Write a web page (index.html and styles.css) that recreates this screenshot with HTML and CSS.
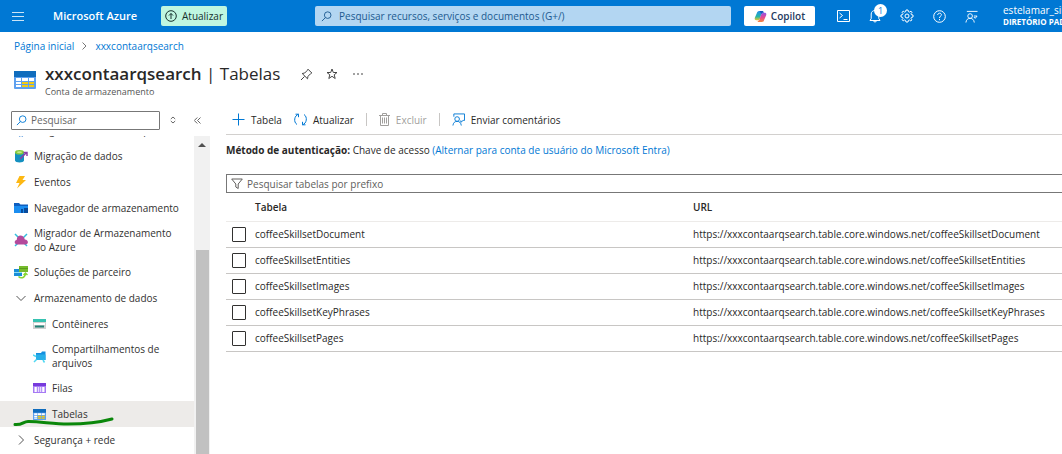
FILE: index.html
```html
<!DOCTYPE html>
<html lang="pt-BR">
<head>
<meta charset="utf-8">
<meta name="viewport" content="width=device-width, initial-scale=1">
<title>xxxcontaarqsearch | Tabelas - Microsoft Azure</title>
<link rel="stylesheet" href="styles.css">
</head>
<body>
<svg class="defs" aria-hidden="true">
  <symbol id="table" viewBox="0 0 22 18" preserveAspectRatio="none"><rect width="22" height="18" rx="1" fill="#5ea0ef"/><rect width="22" height="6" fill="#0f6cbd"/><path fill="#fff" d="M2 7h5v3H2zM2 11h5v2H2zM2 14h5v2H2zM8 7h6v3H8zM15 7h5v3h-5z"/><path fill="#f2cb13" d="M8 11h6v2H8zM8 14h6v2H8zM15 11h5v2h-5zM15 14h5v2h-5z"/></symbol>
  <symbol id="search" viewBox="0 0 12 12"><circle cx="7.3" cy="4.5" r="3.6" fill="none" stroke="currentColor"/><path d="M4.8 7.2 1 11" fill="none" stroke="currentColor"/></symbol>
  <symbol id="feedback" viewBox="0 0 14 14"><path d="M2 4V1h11.500v7H12L9.500 10V8" fill="none" stroke="currentColor"/><circle cx="5.500" cy="6.500" r="2.500" fill="none" stroke="currentColor"/><path d="M1 13.500c.3-3 2-4.500 4.500-4.500s4.200 1.500 4.500 4.500" fill="none" stroke="currentColor"/></symbol>
</svg>
<header class="topbar">
  <button class="icon-btn menu-btn" aria-label="Menu"><svg width="12" height="10" viewBox="0 0 12 10"><path d="M0 1.500h12M0 5.500h12M0 9.500h12" stroke="currentColor" opacity=".8"/></svg></button>
  <a class="brand" href="#">Microsoft Azure</a>
  <button class="upgrade"><svg width="12" height="12" viewBox="0 0 12 12"><g fill="none" stroke="currentColor"><circle cx="6" cy="6" r="5.300"/><path d="M6 9V3.500M4 5.500l2-2 2 2"/></g></svg>Atualizar</button>
  <label class="global-search"><svg width="11" height="11"><use href="#search"/></svg><input type="text" aria-label="Pesquisar recursos" placeholder="Pesquisar recursos, serviços e documentos (G+/)"></label>
  <button class="copilot"><svg width="13" height="13" viewBox="0 0 14 14"><defs><linearGradient id="ca" x2="0" y2="1"><stop stop-color="#1f8df0"/><stop offset=".6" stop-color="#27b5a5"/><stop offset="1" stop-color="#e6c72c"/></linearGradient><linearGradient id="cb" x2="0" y2="1"><stop stop-color="#8f55e8"/><stop offset=".5" stop-color="#e64a91"/><stop offset="1" stop-color="#f58a3c"/></linearGradient></defs><path fill="url(#ca)" d="M9.500 1H5.500C4 1 3.500 2 3 3.500L1 8c-.7 2 0 3 1.500 3h2C6 11 6.300 9.500 7 7.500L8 4c.3-1 .8-1.500 2-1.500z"/><path fill="url(#cb)" d="M4.500 13h4c1.500 0 2-1 2.500-2.500L13 6c.7-2 0-3-1.500-3H10C8.500 3 8 4 7.300 6L6 10c-.4 1.500-1 1.800-2.300 1.800z"/><path fill="#1557c0" d="M6 1h3c1 0 1.300.8 1.600 2H10C8.900 3 8.500 3.500 8 4.500z"/></svg>Copilot</button>
  <nav class="top-icons" aria-label="Ferramentas">
    <button class="icon-btn" aria-label="Cloud Shell"><svg width="13" height="12" viewBox="0 0 13 12"><g fill="none" stroke="currentColor"><path d="M.5.5h12v11H.5zM2.500 3l3 2.500-3 2.500M6.500 9.500h4"/></g></svg></button>
    <button class="icon-btn bell" aria-label="Notificações"><svg width="12" height="14" viewBox="0 0 12 14"><path d="M1 11.500h10L9.800 9.500V5C9.800 2.800 8 1.500 6 1.500S2.200 2.800 2.200 5v4.500zM4.500 12c.3 1.300 2.700 1.300 3 0" fill="none" stroke="currentColor"/></svg><span class="badge">1</span></button>
    <button class="icon-btn" aria-label="Configurações"><svg width="14" height="14" viewBox="0 0 14 14"><g fill="none" stroke="currentColor"><circle cx="7" cy="7" r="2"/><path d="M6 1h2l.4 1.700 1 .4L11 2.200 12 3.300l-1 1.400.4 1L13 6v2l-1.600.4-.4 1 1 1.400-1.200 1.100-1.400-.9-1 .4L8 13H6l-.4-1.600-1-.4-1.400.9L2.100 10.700l.9-1.300-.4-1L1 8V6l1.600-.4.4-1-.9-1.300 1.100-1.200 1.400 1 1-.4z"/></g></svg></button>
    <button class="icon-btn" aria-label="Ajuda"><svg width="13" height="13" viewBox="0 0 13 13"><g fill="none" stroke="currentColor"><circle cx="6.500" cy="6.500" r="5.800"/><path d="M4.700 5c0-2.500 3.700-2.300 3.700-.2 0 1.400-1.900 1.500-1.900 3.200M6.500 9v1.200"/></g></svg></button>
    <button class="icon-btn" aria-label="Comentários"><svg width="13" height="13" viewBox="0 0 14 14"><g fill="none" stroke="currentColor"><path d="M2 1.500h11.500M9.500 6.500h3.500l-2 2.500-1.500-1.500"/><circle cx="5.500" cy="6.500" r="2.500"/><path d="M1 13.500c.3-3 2-4.500 4.500-4.500s4.200 1.500 4.500 4.500"/></g></svg></button>
  </nav>
  <button class="account"><span>estelamar_silva</span><strong>DIRETÓRIO PADRÃO</strong></button>
</header>

<nav class="crumbs" aria-label="Trilha"><a href="#">Página inicial</a><svg width="5" height="8" viewBox="0 0 5 8"><path d="m.5.5 3.500 3.500L.5 7.500" fill="none" stroke="#777"/></svg><a href="#">xxxcontaarqsearch</a></nav>

<section class="title-row">
  <svg width="22" height="18"><use href="#table"/></svg>
  <div><h1><strong>xxxcontaarqsearch</strong> | Tabelas</h1><p>Conta de armazenamento</p></div>
  <div class="title-tools">
    <button class="icon-btn" aria-label="Fixar"><svg width="13" height="13" viewBox="0 0 13 13"><path d="M8 1.200 11.800 5 10.500 5.800 8 8.300l-.5 2.500L2.200 5.500 4.700 5l2.500-2.500zM4.500 8.500 1 12" fill="none" stroke="currentColor"/></svg></button>
    <button class="icon-btn" aria-label="Favorito"><svg width="12" height="12" viewBox="0 0 12 12"><path d="m6 1 1.300 3.500H11L8.200 6.800l1 3.700L6 8.300l-3.200 2.200 1-3.700L1 4.500h3.700z" fill="none" stroke="currentColor"/></svg></button>
    <button class="icon-btn" aria-label="Mais"><svg width="10" height="2"><path d="M0 1h2M4 1h2M8 1h2" stroke="currentColor"/></svg></button>
  </div>
</section>

<div class="workspace">
  <aside class="sidebar">
    <div class="side-tools">
      <label class="side-search"><svg width="11" height="11"><use href="#search"/></svg><input type="text" aria-label="Pesquisar menu" placeholder="Pesquisar"></label>
      <button class="icon-btn" aria-label="Expandir tudo"><svg width="6" height="8" viewBox="0 0 6 8"><path d="M.8 3 3 1l2.200 2M.8 5 3 7l2.200-2" fill="none" stroke="currentColor"/></svg></button>
      <button class="icon-btn" aria-label="Recolher"><svg width="7" height="7" viewBox="0 0 7 7"><path d="m3.300.5-3 3 3 3M6.500.5l-3 3 3 3" fill="none" stroke="currentColor"/></svg></button>
    </div>
    <div class="side-scroll">
      <ul class="menu">
        <li><a href="#"><svg width="14" height="14" viewBox="0 0 14 14"><path d="M4 6v4l2 3.500M10 6v4l-2 3.500" fill="none" stroke="#2b7cd3" stroke-width="1.500"/></svg>Diagnosticar e resolver problemas</a></li>
        <li><a href="#"><svg width="14" height="14" viewBox="0 0 14 14"><path d="M1 3.500v8c0 2.500 9 2.500 9 0v-8z" fill="#1490c0"/><ellipse cx="5.500" cy="3.300" rx="4.500" ry="2.300" fill="#86c83c"/><ellipse cx="5.500" cy="3.300" rx="2.500" ry="1" fill="#c5e889"/><path d="m6 10 6-6M9.500 3.500H13V7" fill="none" stroke="#8a3fa8" stroke-width="1.500"/></svg>Migração de dados</a></li>
        <li><a href="#"><svg width="14" height="14" viewBox="0 0 14 14"><path d="M5.500 1H11L8.500 5H12L3 13.500 5.500 8H2z" fill="#fdb813"/></svg>Eventos</a></li>
        <li><a href="#"><svg width="14" height="14" viewBox="0 0 14 14"><path d="M0 2h5l1.500 1.500H14V12H0z" fill="#0f5fc0"/><path d="M0 5h14v7H0z" fill="#1b8df0"/><path d="M7 8h2v4H7zM10 7h4v5h-4z" fill="#084b9c"/></svg>Navegador de armazenamento</a></li>
        <li class="two"><a href="#"><svg width="14" height="14" viewBox="0 0 14 14"><path d="m1 1 4 4M13 1 9 5M1 13l4-4M13 13 9 9" stroke="#32bedd" stroke-width="1.500"/><path d="M3.500 11.500C0 11.500-.2 7.500 2.700 7c0-5.500 7-6 8.100-.5 4 .3 4 5 .7 5z" fill="#b34a9c"/></svg><span>Migrador de Armazenamento do Azure</span></a></li>
        <li><a href="#"><svg width="14" height="14" viewBox="0 0 14 14"><path d="M0 4h8v7H0z" fill="#198ed8"/><path d="M0 7.500h8" stroke="#8bdcf6"/><path d="M5 1h9v6H5z" fill="#76bc2d"/><path d="M5 3.500h9" stroke="#5a9d1a"/><path d="M4.500 11.500c2 2 6 2 7-2.500M9.500 10l2-2 2 2" fill="none" stroke="#86d633" stroke-width="1.500"/></svg>Soluções de parceiro</a></li>
        <li><a href="#"><svg width="14" height="14" viewBox="0 0 14 14"><path d="m2.500 5 4.500 4.500L11.500 5" fill="none" stroke="#555"/></svg>Armazenamento de dados</a></li>
        <li class="sub"><a href="#"><svg width="13" height="14" viewBox="0 0 13 14"><path d="M0 2h13v10H0z" fill="#d0d0d0"/><path d="M0 2h13v3H0z" fill="#37c2b1"/><path d="M1 6h11v2H1z" fill="#fff"/><path d="M2 9.500h9" stroke="#258277" stroke-width="2"/></svg>Contêineres</a></li>
        <li class="sub two"><a href="#"><svg width="13" height="14" viewBox="0 0 13 14"><path d="M3 4h5l1-1.500h3.500V11H3z" fill="#1490df"/><path d="M3 5.500h9.500V11H3z" fill="#28afe8"/><path d="m0 6 3 1.500M1 13l2.500-2.500M10 11l1.500 2.500" stroke="#50d8f2" stroke-width="1.500"/></svg><span>Compartilhamentos de arquivos</span></a></li>
        <li class="sub"><a href="#"><svg width="13" height="14" viewBox="0 0 13 14"><path d="M0 2h13v10H0z" fill="#a67af4"/><path d="M0 2h13v3H0z" fill="#773adc"/><path d="M1.500 6h2.300v5H1.500zM9.200 6h2.300v5H9.200z" fill="#fff"/><path d="M4.800 6h1.500v5H4.800zM7 6h1.300v5H7z" fill="#e8dcff"/></svg>Filas</a></li>
        <li class="sub selected"><a href="#" aria-current="page"><svg width="13" height="11"><use href="#table"/></svg>Tabelas</a>
          <svg class="marker" width="102" height="10" viewBox="0 0 102 10"><path d="M2 7.500c8 .5 8-3 13-3 12-.2 25 2.500 40 2.500 20 0 31-1.500 44-5" fill="none" stroke="#0b870b" stroke-width="3" stroke-linecap="round"/></svg></li>
        <li><a href="#"><svg width="14" height="14" viewBox="0 0 14 14"><path d="m5 2.500 4.500 4.500L5 11.500" fill="none" stroke="#555"/></svg>Segurança + rede</a></li>
      </ul>
      <div class="scrollbar"><svg width="8" height="4"><path d="M0 4 4 0l4 4z" fill="#505050"/></svg><span></span></div>
    </div>
  </aside>

  <main class="content">
    <div class="commands">
      <button><svg width="13" height="13" viewBox="0 0 13 13"><path d="M6.500.5v12M.5 6.500h12" stroke="currentColor"/></svg>Tabela</button>
      <button><svg width="13" height="13" viewBox="0 0 13 13"><path d="M4.500 1.200C.3 2.500-.8 9 3 11.500M8.500 11.800c4.200-1.300 5.300-7.800 1.500-10.300M1.500 1.200h3v3M11.500 11.800h-3v-3" fill="none" stroke="currentColor"/></svg>Atualizar</button>
      <span class="sep"></span>
      <button disabled><svg width="11" height="13" viewBox="0 0 11 13"><path d="M0 2.500h11M3.500 2.500v-2h4v2M1.500 3v9.500h8V3M3.500 4.500v6M5.500 4.500v6M7.500 4.500v6" fill="none" stroke="currentColor"/></svg>Excluir</button>
      <span class="sep"></span>
      <button><svg width="13" height="13"><use href="#feedback"/></svg>Enviar comentários</button>
    </div>
    <p class="auth"><strong>Método de autenticação:</strong> Chave de acesso <a href="#">(Alternar para conta de usuário do Microsoft Entra)</a></p>
    <label class="filter"><svg width="12" height="12" viewBox="0 0 12 12"><path d="M.7 1h10.600L7.200 6v4.500L4.800 9V6z" fill="none" stroke="currentColor"/></svg><input type="text" aria-label="Filtrar tabelas" placeholder="Pesquisar tabelas por prefixo"></label>
    <table class="grid">
      <thead><tr><th class="check"></th><th class="name">Tabela</th><th>URL</th></tr></thead>
      <tbody>
        <tr><td><input type="checkbox" aria-label="coffeeSkillsetDocument"></td><td>coffeeSkillsetDocument</td><td>https://xxxcontaarqsearch.table.core.windows.net/coffeeSkillsetDocument</td></tr>
        <tr><td><input type="checkbox" aria-label="coffeeSkillsetEntities"></td><td>coffeeSkillsetEntities</td><td>https://xxxcontaarqsearch.table.core.windows.net/coffeeSkillsetEntities</td></tr>
        <tr><td><input type="checkbox" aria-label="coffeeSkillsetImages"></td><td>coffeeSkillsetImages</td><td>https://xxxcontaarqsearch.table.core.windows.net/coffeeSkillsetImages</td></tr>
        <tr><td><input type="checkbox" aria-label="coffeeSkillsetKeyPhrases"></td><td>coffeeSkillsetKeyPhrases</td><td>https://xxxcontaarqsearch.table.core.windows.net/coffeeSkillsetKeyPhrases</td></tr>
        <tr><td><input type="checkbox" aria-label="coffeeSkillsetPages"></td><td>coffeeSkillsetPages</td><td>https://xxxcontaarqsearch.table.core.windows.net/coffeeSkillsetPages</td></tr>
      </tbody>
    </table>
  </main>
</div>
</body>
</html>
```
FILE: styles.css
```css
* { box-sizing: border-box; }
body {
  margin: 0;
  height: 100vh;
  display: flex;
  flex-direction: column;
  overflow: hidden;
  background: #fff;
  color: #292827;
  font: 10px/14px "Open Sans", "Noto Sans", sans-serif;
}
svg { flex: none; display: block; }
.defs { position: absolute; width: 0; height: 0; }
a { color: #0078d4; text-decoration: none; }
button, input { font: inherit; color: inherit; }
button { border: 0; padding: 0; background: none; }
input[type="text"] { border: 0; padding: 0; flex: 1; min-width: 0; background: none; outline: 0; }
input::placeholder { color: inherit; opacity: 1; }
h1, p { margin: 0; }
.icon-btn { display: grid; place-items: center; }

.topbar {
  flex: none;
  display: flex;
  align-items: center;
  height: 32px;
  background: #0078d4;
  color: #fff;
  white-space: nowrap;
  overflow: hidden;
}
.menu-btn { margin-left: 12px; }
.brand { width: 108px; margin-left: 29px; color: #fff; font-size: 11px; font-weight: 600; }
.upgrade {
  display: flex;
  align-items: center;
  justify-content: center;
  gap: 5px;
  width: 66px;
  height: 20px;
  border-radius: 2px;
  background: #bff6e0;
  color: #16302c;
  font-weight: 500;
}
.global-search {
  flex: 1;
  display: flex;
  align-items: center;
  gap: 7px;
  height: 20px;
  margin-left: 88px;
  padding-left: 6px;
  border-radius: 2px;
  background: #b3d6f2;
  color: #1c5a90;
}
.copilot {
  display: flex;
  align-items: center;
  justify-content: center;
  gap: 4px;
  width: 71px;
  height: 20px;
  margin-left: 13px;
  border-radius: 2px;
  background: #fff;
  color: #243a5e;
  font-weight: 600;
}
.top-icons { display: flex; margin-left: 12px; }
.top-icons .icon-btn { width: 32px; height: 32px; }
.bell { position: relative; }
.badge {
  position: absolute;
  top: 4px;
  right: 4px;
  width: 13px;
  height: 13px;
  border-radius: 50%;
  background: #fff;
  color: #0078d4;
  font-size: 9px;
  line-height: 13px;
}
.account { width: 75px; padding-left: 16px; overflow: hidden; text-align: left; line-height: 12px; }
.account span, .account strong { display: block; }
.account strong { font-size: 8px; }

.crumbs { flex: none; display: flex; align-items: center; gap: 8px; height: 28px; padding-left: 14px; }
.title-row { flex: none; display: flex; align-items: center; gap: 9px; height: 40px; padding-left: 14px; }
.title-row h1 { font-size: 17px; line-height: 24px; font-weight: 400; }
.title-row h1 strong { font-weight: 600; }
.title-row p { color: #555; font-size: 9px; line-height: 12px; }
.title-tools { display: flex; align-self: flex-start; height: 28px; margin-left: 4px; color: #444; }
.title-tools .icon-btn { width: 26px; }

.workspace { flex: 1; min-height: 0; display: flex; }
.sidebar { flex: none; width: 210px; display: flex; flex-direction: column; }
.side-tools { flex: none; display: flex; align-items: center; height: 36px; padding: 4px 0 0 11px; color: #666; }
.side-tools .icon-btn { width: 25px; }
.side-search {
  display: flex;
  align-items: center;
  gap: 4px;
  width: 149px;
  height: 19px;
  padding-left: 4px;
  border: 1px solid #777;
  border-radius: 1px;
}
.side-search svg, .commands svg { color: #0078d4; }
.side-scroll { flex: 1; min-height: 0; display: flex; overflow: hidden; }
.menu {
  flex: 1;
  min-width: 0;
  display: flex;
  flex-direction: column;
  justify-content: flex-end;
  margin: 0;
  padding: 0 0 1px;
  list-style: none;
}
.menu li { position: relative; flex: none; height: 26px; }
.menu .two { height: 38px; }
.menu a { display: flex; align-items: center; gap: 6px; height: 100%; padding: 0 8px 0 14px; color: #323130; white-space: nowrap; }
.menu .two a { padding-right: 16px; white-space: normal; }
.menu .sub a { padding-left: 33px; }
.menu .selected { background: #edebe9; }
.marker { position: absolute; left: 13px; bottom: 0; }
.scrollbar {
  flex: none;
  display: flex;
  flex-direction: column;
  align-items: center;
  gap: 103px;
  width: 16px;
  padding-top: 7px;
  background: #f1f1f1;
}
.scrollbar span { flex: 1; width: 13px; background: #c1c1c1; }

.content { flex: 1; min-width: 0; padding: 5px 0 0 16px; }
.commands { display: flex; align-items: center; height: 30px; border-bottom: 1px solid #d2d0ce; }
.commands button { display: flex; align-items: center; gap: 6px; margin: 0 6px; }
.commands button:disabled, .commands button:disabled svg { color: #a19f9d; }
.sep { width: 1px; height: 13px; margin: 0 6px; background: #c8c6c4; }
.auth { padding: 8px 0 17px; }
.auth a { color: #0078d4; }
.filter {
  display: flex;
  align-items: center;
  gap: 4px;
  height: 19px;
  padding-left: 4px;
  border: 1px solid #777;
  border-right: 0;
  color: #605e5c;
}
.grid { width: 100%; table-layout: fixed; border-collapse: collapse; }
.grid th, .grid td { height: 26px; padding: 0; border-bottom: 1px solid #c8c6c4; text-align: left; white-space: nowrap; }
.grid th { height: 28px; border-color: #edebe9; font-weight: 600; }
.check { width: 29px; }
.name { width: 438px; }
.grid input {
  appearance: none;
  display: block;
  width: 14px;
  height: 15px;
  margin: 0 0 0 6px;
  border: 1px solid #323130;
  border-radius: 1px;
}
```
